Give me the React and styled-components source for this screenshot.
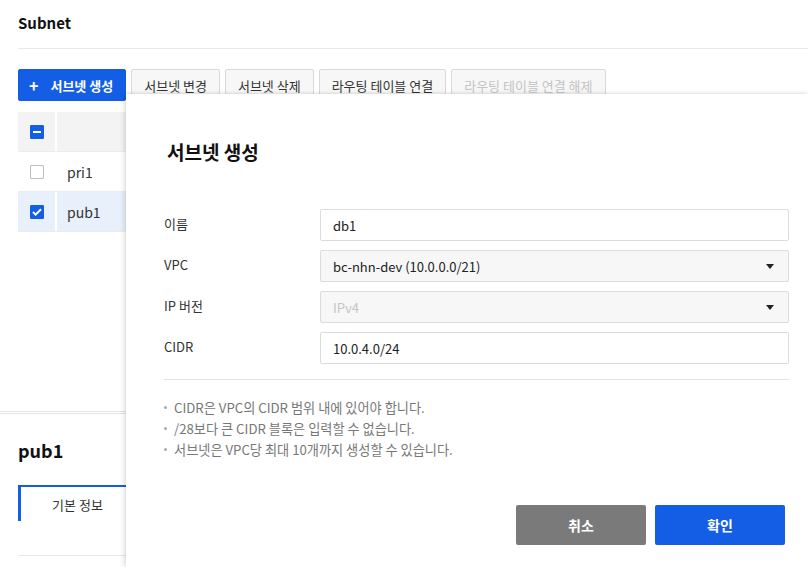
import { Fragment } from "react";
import styled, { createGlobalStyle } from "styled-components";

const BLUE = "#135ee5";

const GlobalStyle = createGlobalStyle`
  html, body { margin: 0; padding: 0; background: #fff; }
  body {
    font-family: "Noto Sans CJK KR", "Noto Sans", sans-serif;
    color: #222;
    overflow: hidden;
  }
  #root { width: 808px; height: 567px; position: relative; overflow: hidden; }
`;

const Page = styled.div`
  padding-left: 18px;
`;

const Header = styled.div`
  height: 49px;
  display: flex;
  align-items: center;
  border-bottom: 1px solid #e8e8e8;
  font-size: 15px;
  font-weight: 700;
  color: #111;
  box-sizing: border-box;
  padding-bottom: 4px;
`;

const Toolbar = styled.div`
  display: flex;
  gap: 5px;
  margin-top: 20px;
`;

const ToolButton = styled.button`
  height: 32px;
  padding: ${(p) => (p.$primary ? "0 12px 0 10px" : "0 12px")};
  border: 1px solid ${(p) => (p.$primary ? BLUE : "#d9d9d9")};
  border-radius: 2px;
  background: ${(p) => (p.$primary ? BLUE : "#f7f7f7")};
  color: ${(p) => (p.$primary ? "#fff" : p.$disabled ? "#c4c4c4" : "#333")};
  font-family: inherit;
  font-size: 13px;
  font-weight: ${(p) => (p.$primary ? 700 : 400)};
  display: flex;
  align-items: center;
  gap: 12px;
  box-sizing: border-box;
  white-space: nowrap;
`;

const Plus = styled.span`
  font-size: 16px;
  font-weight: 700;
`;

const Table = styled.div`
  margin-top: 11px;
  width: 300px;
`;

const Row = styled.div`
  display: grid;
  grid-template-columns: 39px 1fr;
  height: 40px;
  box-sizing: border-box;
  background: ${(p) => (p.$head ? "#f3f3f3" : p.$selected ? "#e8f0fc" : "#fff")};
  border-bottom: 1px solid #ececec;
`;

const Cell = styled.div`
  display: flex;
  align-items: center;
  padding-left: ${(p) => (p.$check ? "12px" : "10px")};
  border-right: ${(p) => (p.$check ? "2px solid #fff" : "none")};
  font-size: 14px;
  color: #333;
`;

const Check = styled.span`
  width: 14px;
  height: 14px;
  box-sizing: border-box;
  border-radius: 1px;
  border: 1px solid ${(p) => (p.$on ? BLUE : "#bdbdbd")};
  background: ${(p) => (p.$on ? BLUE : "#fff")};
  display: flex;
  align-items: center;
  justify-content: center;
`;

const DetailDivider = styled.div`
  margin-top: 179px;
  margin-left: -18px;
  border-top: 1px solid #e4e4e4;
  border-bottom: 1px solid #e4e4e4;
  height: 1px;
`;

const DetailTitle = styled.div`
  font-size: 18px;
  font-weight: 700;
  color: #111;
  margin-top: 23px;
`;

const Tab = styled.div`
  margin-top: 22px;
  width: 116px;
  height: 36px;
  box-sizing: border-box;
  border-left: 3px solid ${BLUE};
  border-top: 2px solid ${BLUE};
  display: flex;
  align-items: center;
  justify-content: center;
  font-size: 13px;
  color: #333;
`;

const TabLine = styled.div`
  margin-top: 34px;
  border-top: 1px solid #e8e8e8;
`;

const Panel = styled.div`
  position: absolute;
  left: 126px;
  top: 94px;
  right: 0;
  bottom: 0;
  background: #fff;
  box-shadow: -2px 0 5px rgba(0, 0, 0, 0.12), 0 -1px 3px rgba(0, 0, 0, 0.06);
  padding: 42px 19px 0 38px;
  box-sizing: border-box;
`;

const PanelTitle = styled.div`
  font-size: 19px;
  font-weight: 700;
  color: #111;
  line-height: 32px;
  padding-left: 3px;
`;

const Form = styled.div`
  margin-top: 41px;
  display: grid;
  grid-template-columns: 156px 1fr;
  row-gap: 9px;
  padding-bottom: 15px;
  border-bottom: 1px solid #e2e2e2;
`;

const Label = styled.div`
  font-size: 13px;
  color: #333;
  display: flex;
  align-items: center;
  padding-bottom: 3px;
`;

const Field = styled.div`
  height: 32px;
  box-sizing: border-box;
  border: 1px solid #dcdcdc;
  border-radius: 2px;
  background: ${(p) => (p.$select ? "#f7f7f7" : "#fff")};
  color: ${(p) => (p.$disabled ? "#c6c6c6" : "#222")};
  font-size: 13px;
  display: flex;
  align-items: center;
  justify-content: space-between;
  padding: 0 14px 0 12px;
`;

const Caret = styled.span`
  width: 0;
  height: 0;
  border-left: 4px solid transparent;
  border-right: 4px solid transparent;
  border-top: 5px solid #222;
`;

const Notes = styled.ul`
  list-style: none;
  margin: 17px 0 0;
  padding: 0;
`;

const Note = styled.li`
  font-size: 13.2px;
  color: #777;
  line-height: 21px;
  display: flex;
  align-items: center;
  &::before {
    content: "";
    width: 3px;
    height: 3px;
    border-radius: 50%;
    background: #aaa;
    margin-right: 7px;
  }
`;

const Actions = styled.div`
  display: flex;
  justify-content: flex-end;
  gap: 9px;
  margin-top: 45px;
  padding-right: 4px;
`;

const ActionButton = styled.button`
  width: 130px;
  height: 40px;
  border: none;
  border-radius: 2px;
  background: ${(p) => (p.$primary ? BLUE : "#7a7a7a")};
  color: #fff;
  font-family: inherit;
  font-size: 14px;
  font-weight: 700;
`;

const fields = [
  { label: "이름", value: "db1" },
  { label: "VPC", value: "bc-nhn-dev (10.0.0.0/21)", select: true },
  { label: "IP 버전", value: "IPv4", select: true, disabled: true },
  { label: "CIDR", value: "10.0.4.0/24" },
];

const notes = [
  "CIDR은 VPC의 CIDR 범위 내에 있어야 합니다.",
  "/28보다 큰 CIDR 블록은 입력할 수 없습니다.",
  "서브넷은 VPC당 최대 10개까지 생성할 수 있습니다.",
];

export default function App() {
  return (
    <>
      <GlobalStyle />
      <Page>
        <Header>Subnet</Header>
        <Toolbar>
          <ToolButton $primary>
            <Plus>+</Plus>
            서브넷 생성
          </ToolButton>
          <ToolButton>서브넷 변경</ToolButton>
          <ToolButton>서브넷 삭제</ToolButton>
          <ToolButton>라우팅 테이블 연결</ToolButton>
          <ToolButton $disabled>라우팅 테이블 연결 해제</ToolButton>
        </Toolbar>
        <Table>
          <Row $head>
            <Cell $check>
              <Check $on>
                <svg width="8" height="2" viewBox="0 0 8 2">
                  <rect width="8" height="2" fill="#fff" />
                </svg>
              </Check>
            </Cell>
            <Cell />
          </Row>
          <Row>
            <Cell $check>
              <Check />
            </Cell>
            <Cell>pri1</Cell>
          </Row>
          <Row $selected>
            <Cell $check>
              <Check $on>
                <svg width="10" height="8" viewBox="0 0 10 8">
                  <path d="M1 4l2.6 2.6L9 1.2" stroke="#fff" strokeWidth="2" fill="none" />
                </svg>
              </Check>
            </Cell>
            <Cell>pub1</Cell>
          </Row>
        </Table>
        <DetailDivider />
        <DetailTitle>pub1</DetailTitle>
        <Tab>기본 정보</Tab>
        <TabLine />
      </Page>

      <Panel>
        <PanelTitle>서브넷 생성</PanelTitle>
        <Form>
          {fields.map((f) => (
            <Fragment key={f.label}>
              <Label>{f.label}</Label>
              <Field $select={f.select} $disabled={f.disabled}>
                {f.value}
                {f.select && <Caret />}
              </Field>
            </Fragment>
          ))}
        </Form>
        <Notes>
          {notes.map((n) => (
            <Note key={n}>{n}</Note>
          ))}
        </Notes>
        <Actions>
          <ActionButton>취소</ActionButton>
          <ActionButton $primary>확인</ActionButton>
        </Actions>
      </Panel>
    </>
  );
}
